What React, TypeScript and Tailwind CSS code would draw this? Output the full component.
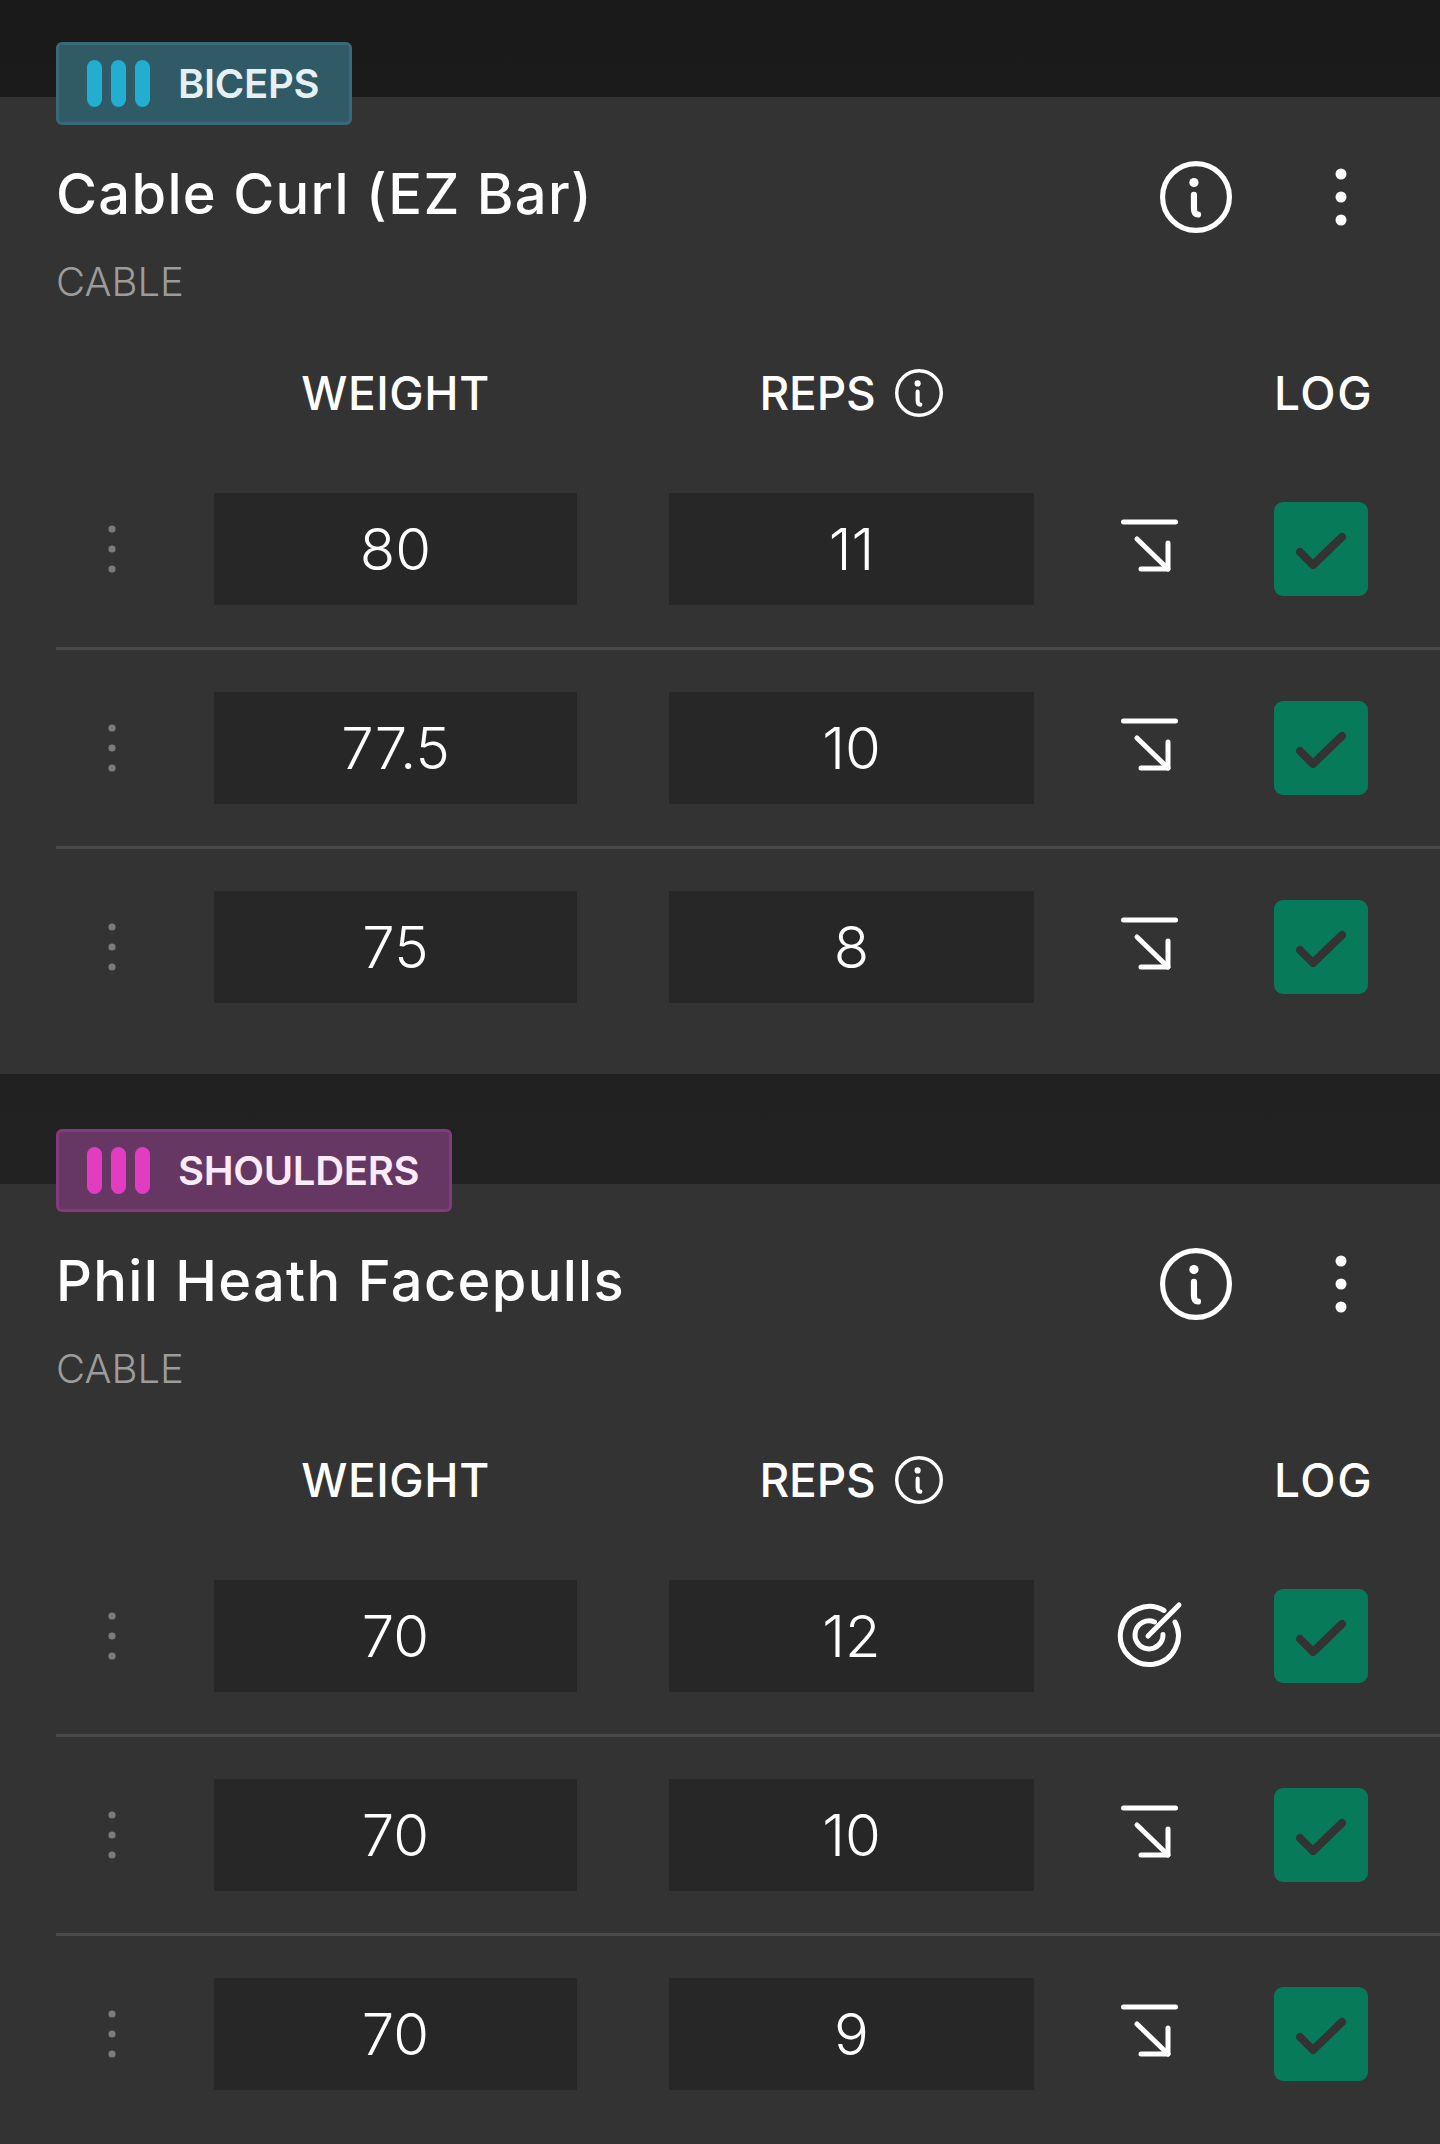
import React from "react";

const font = { fontFamily: "Inter, 'Liberation Sans', sans-serif" };

function InfoIcon({ className }: { className: string }) {
  return (
    <svg viewBox="0 0 70 70" className={className} fill="none" stroke="currentColor" strokeLinecap="round">
      <circle cx="35" cy="35" r="32.5" strokeWidth="5" />
      <circle cx="33" cy="21" r="4.5" fill="currentColor" stroke="none" />
      <path d="M33 33V46Q33 52 37 52" strokeWidth="6" />
    </svg>
  );
}

function DotsIcon() {
  return (
    <svg viewBox="0 0 12 58" className="w-[12px] h-[58px]" fill="currentColor">
      <circle cx="6" cy="6" r="5.5" />
      <circle cx="6" cy="29" r="5.5" />
      <circle cx="6" cy="52" r="5.5" />
    </svg>
  );
}

function DragIcon() {
  return (
    <svg viewBox="0 0 8 48" className="w-[8px] h-[48px] text-[#7b7b7b]" fill="currentColor">
      <circle cx="4" cy="4" r="3.6" />
      <circle cx="4" cy="24" r="3.6" />
      <circle cx="4" cy="44" r="3.6" />
    </svg>
  );
}

function ArrowIcon() {
  return (
    <svg viewBox="0 0 70 70" className="w-[70px] h-[70px]" fill="none" stroke="white" strokeWidth="5" strokeLinecap="round" strokeLinejoin="round">
      <path d="M9.5 8H61.5" />
      <path d="M23 25L54 55" />
      <path d="M54 29V55H27" />
    </svg>
  );
}

function TargetIcon() {
  return (
    <svg viewBox="0 0 70 70" className="w-[70px] h-[70px]" fill="none" stroke="white" strokeWidth="5" strokeLinecap="round">
      <path d="M50 9.5A29 29 0 1 0 61 21" />
      <path d="M40.5 21A14 14 0 1 0 49 33.5" />
      <path d="M34 35L65 4" />
    </svg>
  );
}

function CheckBox() {
  return (
    <div className="w-[94px] h-[94px] rounded-[9px] bg-[#077a5a] shrink-0">
      <svg viewBox="0 0 94 94" className="w-[94px] h-[94px]" fill="none" stroke="#333333" strokeWidth="8" strokeLinecap="round" strokeLinejoin="round">
        <path d="M26 50L39 63L68 35" />
      </svg>
    </div>
  );
}

type SetRow = { w: string; r: string; target?: boolean };

function Row({ set, last }: { set: SetRow; last: boolean }) {
  return (
    <div className={`flex items-center pt-[42px] ${last ? "pb-[71px]" : "pb-[42px] border-b-[3px] border-[#4a4a4a]"}`}>
      <div className="w-[158px] pl-[52px] shrink-0">
        <DragIcon />
      </div>
      <div className="w-[363px] h-[112px] bg-[#272727] flex items-center justify-center text-[58px] font-light text-white shrink-0">
        {set.w}
      </div>
      <div className="w-[365px] h-[112px] ml-[92px] bg-[#272727] flex items-center justify-center text-[58px] font-light text-white shrink-0">
        {set.r}
      </div>
      <div className="w-[230px] flex justify-center shrink-0">
        {set.target ? <TargetIcon /> : <ArrowIcon />}
      </div>
      <div className="ml-[10px]">
        <CheckBox />
      </div>
    </div>
  );
}

function Exercise({
  muscle,
  badge,
  border,
  bar,
  text,
  title,
  rows,
  top,
}: {
  muscle: string;
  badge: string;
  border: string;
  bar: string;
  text: string;
  title: string;
  rows: SetRow[];
  top: string;
}) {
  return (
    <section className={top}>
      <div className="relative bg-[#333333] pl-[56px]">
        <div className={`absolute left-[56px] -top-[55px] h-[83px] flex items-center pl-[28px] pr-[30px] rounded-[6px] border-[3px] ${badge} ${border}`}>
          <div className="flex gap-[9px]">
            <span className={`w-[15px] h-[47px] rounded-full ${bar}`} />
            <span className={`w-[15px] h-[47px] rounded-full ${bar}`} />
            <span className={`w-[15px] h-[47px] rounded-full ${bar}`} />
          </div>
          <span className={`ml-[28px] text-[40px] leading-none font-semibold tracking-[-0.3px] ${text}`}>{muscle}</span>
        </div>

        <div className="flex items-start pr-[72px] pt-[64px]">
          <div className="flex-1">
            <h2 className="text-[56px] leading-[66px] font-medium tracking-[1.3px] text-white">{title}</h2>
            <div className="mt-[31px] text-[40px] leading-[48px] font-light text-[#9c9c9c]">CABLE</div>
          </div>
          <div className="flex items-center text-white">
            <InfoIcon className="w-[72px] h-[72px]" />
            <div className="ml-[103px] mr-[21px]">
              <DotsIcon />
            </div>
          </div>
        </div>

        <div className="flex items-center pr-[72px] mt-[59px] h-[56px] text-[46px] font-medium tracking-[0.6px] text-white">
          <div className="w-[158px] shrink-0" />
          <div className="w-[363px] text-center shrink-0">WEIGHT</div>
          <div className="w-[365px] ml-[92px] flex items-center justify-center gap-[20px] shrink-0">
            <span className="tracking-[-0.2px]">REPS</span>
            <InfoIcon className="w-[48px] h-[48px]" />
          </div>
          <div className="w-[240px] shrink-0" />
          <div className="w-[94px] text-center tracking-[1.6px] shrink-0">LOG</div>
        </div>

        <div className="mt-[30px]">
          {rows.map((s, i) => (
            <Row key={i} set={s} last={i === rows.length - 1} />
          ))}
        </div>
      </div>
    </section>
  );
}

export default function App() {
  return (
    <div style={font} className="w-[1440px] h-[2144px] overflow-hidden bg-gradient-to-b from-[#1a1a1a] to-[#282828]">
      <Exercise
        top="pt-[97px]"
        muscle="BICEPS"
        badge="bg-[#2f5a66]"
        border="border-[#3a6a7a]"
        bar="bg-[#22aed1]"
        text="text-[#e6f0f3]"
        title="Cable Curl (EZ Bar)"
        rows={[
          { w: "80", r: "11" },
          { w: "77.5", r: "10" },
          { w: "75", r: "8" },
        ]}
      />
      <Exercise
        top="pt-[110px]"
        muscle="SHOULDERS"
        badge="bg-[#673763]"
        border="border-[#85397f]"
        bar="bg-[#e23cc2]"
        text="text-[#fbeaf8]"
        title="Phil Heath Facepulls"
        rows={[
          { w: "70", r: "12", target: true },
          { w: "70", r: "10" },
          { w: "70", r: "9" },
        ]}
      />
    </div>
  );
}
